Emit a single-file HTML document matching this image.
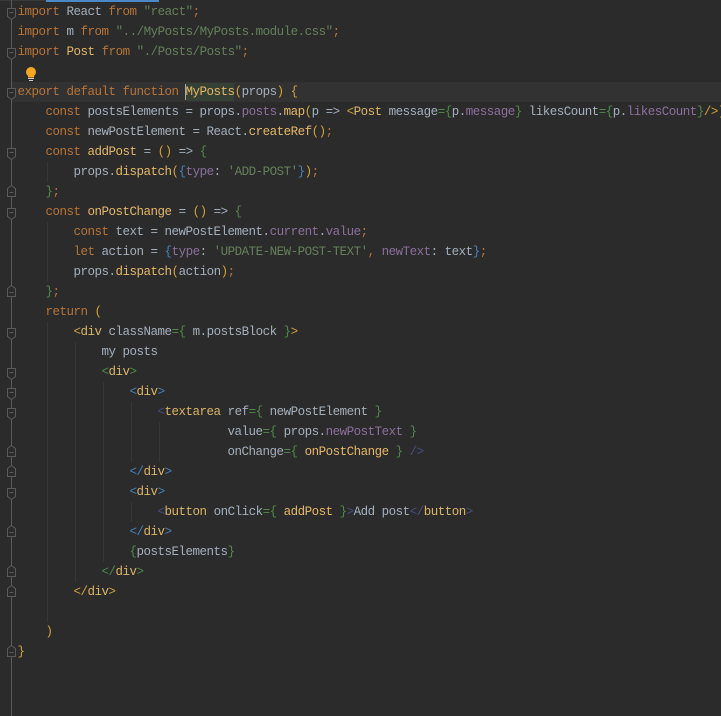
<!DOCTYPE html>
<html><head><meta charset="utf-8">
<style>
html,body{margin:0;padding:0;width:721px;height:716px;overflow:hidden;background:#2b2b2b}
#e{position:relative;width:721px;height:716px;overflow:hidden;background:#2b2b2b;font-family:"Liberation Mono",monospace;font-size:12.5px;letter-spacing:-0.5px;color:#a3b0bd}
.l{position:absolute;left:17.5px;height:20px;line-height:20px;white-space:pre;width:720px}
.k{color:#b87438}.s{color:#64805a}.p{color:#8c6f9e}.f{color:#e6b768}.t{color:#dcb468}
.g{color:#4f8a4a}.y{color:#cfa23a}.b{color:#4682bc}.d{color:#454f85}.o{color:#b87438}
.ig{position:absolute;width:1px;background:#373737}
svg{position:absolute;left:0;top:0}
</style></head><body><div id="e">
<div style="position:absolute;left:46px;top:0;width:113px;height:2px;background:#4a88c7"></div>
<div style="position:absolute;left:0;top:0;width:46px;height:1px;background:#3a3a3a"></div>
<div style="position:absolute;left:12px;top:82px;width:709px;height:20px;background:#323232"></div>
<div style="position:absolute;left:186px;top:83px;width:48px;height:18px;background:#344134"></div>
<div style="position:absolute;left:185px;top:84px;width:1px;height:16px;background:#a8a8a0"></div>
<div class="ig" style="left:47px;top:162px;height:20px"></div>
<div class="ig" style="left:47px;top:222px;height:60px"></div>
<div class="ig" style="left:47px;top:322px;height:300px"></div>
<div class="ig" style="left:75px;top:342px;height:240px"></div>
<div class="ig" style="left:103px;top:382px;height:180px"></div>
<div class="ig" style="left:131px;top:402px;height:60px"></div>
<div class="ig" style="left:159px;top:422px;height:40px"></div>
<div class="ig" style="left:131px;top:502px;height:20px"></div>
<svg width="40" height="716" fill="#2b2b2b" stroke="#5a5a5a" stroke-width="1">
<line x1="11.5" y1="0" x2="11.5" y2="716"/>
<g id="marks">
<path d="M7.5 8.5h8v8l-4 3l-4-3z"/><path d="M9.5 12.5h4"/>
<path d="M7.5 48.5h8v8l-4 3l-4-3z"/><path d="M9.5 52.5h4"/>
<path d="M7.5 88.5h8v8l-4 3l-4-3z"/><path d="M9.5 92.5h4"/>
<path d="M7.5 148.5h8v8l-4 3l-4-3z"/><path d="M9.5 152.5h4"/>
<path d="M7.5 208.5h8v8l-4 3l-4-3z"/><path d="M9.5 212.5h4"/>
<path d="M7.5 328.5h8v8l-4 3l-4-3z"/><path d="M9.5 332.5h4"/>
<path d="M7.5 368.5h8v8l-4 3l-4-3z"/><path d="M9.5 372.5h4"/>
<path d="M7.5 388.5h8v8l-4 3l-4-3z"/><path d="M9.5 392.5h4"/>
<path d="M7.5 408.5h8v8l-4 3l-4-3z"/><path d="M9.5 412.5h4"/>
<path d="M7.5 488.5h8v8l-4 3l-4-3z"/><path d="M9.5 492.5h4"/>
<path d="M7.5 196.5v-8l4-3l4 3v8z"/><path d="M9.5 192.5h4"/>
<path d="M7.5 296.5v-8l4-3l4 3v8z"/><path d="M9.5 292.5h4"/>
<path d="M7.5 456.5v-8l4-3l4 3v8z"/><path d="M9.5 452.5h4"/>
<path d="M7.5 476.5v-8l4-3l4 3v8z"/><path d="M9.5 472.5h4"/>
<path d="M7.5 536.5v-8l4-3l4 3v8z"/><path d="M9.5 532.5h4"/>
<path d="M7.5 576.5v-8l4-3l4 3v8z"/><path d="M9.5 572.5h4"/>
<path d="M7.5 596.5v-8l4-3l4 3v8z"/><path d="M9.5 592.5h4"/>
<path d="M7.5 656.5v-8l4-3l4 3v8z"/><path d="M9.5 652.5h4"/>
</g>
<circle cx="31" cy="72" r="5" fill="#f5a623" stroke="none"/>
<rect x="28" y="75" width="6" height="2.5" fill="#f5a623" stroke="none"/>
<rect x="28" y="78" width="6" height="1" fill="#ccc" stroke="none"/>
<rect x="29" y="80" width="4" height="1" fill="#ccc" stroke="none"/>
</svg>
<div class="l" style="top:2px"><span class="k">import</span> React <span class="k">from</span> <span class="s">"react"</span><span class="o">;</span></div>
<div class="l" style="top:22px"><span class="k">import</span> m <span class="k">from</span> <span class="s">"../MyPosts/MyPosts.module.css"</span><span class="o">;</span></div>
<div class="l" style="top:42px"><span class="k">import</span> <span class="f">Post</span> <span class="k">from</span> <span class="s">"./Posts/Posts"</span><span class="o">;</span></div>
<div class="l" style="top:82px"><span class="k">export default function</span> <span class="f">MyPosts</span><span class="y">(</span>props<span class="y">)</span> <span class="y">{</span></div>
<div class="l" style="top:102px">    <span class="k">const</span> postsElements = props.<span class="p">posts</span>.<span class="f">map</span><span class="y">(</span>p =&gt; <span class="y">&lt;</span><span class="t">Post</span> message<span class="g">={</span>p.<span class="p">message</span><span class="g">}</span> likesCount<span class="g">={</span>p.<span class="p">likesCount</span><span class="g">}</span><span class="y">/&gt;)</span><span class="o">;</span></div>
<div class="l" style="top:122px">    <span class="k">const</span> newPostElement = React.<span class="f">createRef</span><span class="y">()</span><span class="o">;</span></div>
<div class="l" style="top:142px">    <span class="k">const</span> <span class="f">addPost</span> = <span class="y">()</span> =&gt; <span class="g">{</span></div>
<div class="l" style="top:162px">        props.<span class="f">dispatch</span><span class="y">(</span><span class="b">{</span><span class="p">type</span>: <span class="s">'ADD-POST'</span><span class="b">}</span><span class="y">)</span><span class="o">;</span></div>
<div class="l" style="top:182px">    <span class="g">}</span><span class="o">;</span></div>
<div class="l" style="top:202px">    <span class="k">const</span> <span class="f">onPostChange</span> = <span class="y">()</span> =&gt; <span class="g">{</span></div>
<div class="l" style="top:222px">        <span class="k">const</span> text = newPostElement.<span class="p">current</span>.<span class="p">value</span><span class="o">;</span></div>
<div class="l" style="top:242px">        <span class="k">let</span> action = <span class="b">{</span><span class="p">type</span>: <span class="s">'UPDATE-NEW-POST-TEXT'</span><span class="o">,</span> <span class="p">newText</span>: text<span class="b">}</span><span class="o">;</span></div>
<div class="l" style="top:262px">        props.<span class="f">dispatch</span><span class="y">(</span>action<span class="y">)</span><span class="o">;</span></div>
<div class="l" style="top:282px">    <span class="g">}</span><span class="o">;</span></div>
<div class="l" style="top:302px">    <span class="k">return</span> <span class="y">(</span></div>
<div class="l" style="top:322px">        <span class="y">&lt;</span><span class="t">div</span> className<span class="g">={</span> m.postsBlock <span class="g">}</span><span class="y">&gt;</span></div>
<div class="l" style="top:342px">            my posts</div>
<div class="l" style="top:362px">            <span class="g">&lt;</span><span class="t">div</span><span class="g">&gt;</span></div>
<div class="l" style="top:382px">                <span class="b">&lt;</span><span class="t">div</span><span class="b">&gt;</span></div>
<div class="l" style="top:402px">                    <span class="d">&lt;</span><span class="t">textarea</span> ref<span class="g">={</span> newPostElement <span class="g">}</span></div>
<div class="l" style="top:422px">                              value<span class="g">={</span> props.<span class="p">newPostText</span> <span class="g">}</span></div>
<div class="l" style="top:442px">                              onChange<span class="g">={</span> <span class="f">onPostChange</span> <span class="g">}</span> <span class="d">/&gt;</span></div>
<div class="l" style="top:462px">                <span class="b">&lt;/</span><span class="t">div</span><span class="b">&gt;</span></div>
<div class="l" style="top:482px">                <span class="b">&lt;</span><span class="t">div</span><span class="b">&gt;</span></div>
<div class="l" style="top:502px">                    <span class="d">&lt;</span><span class="t">button</span> onClick<span class="g">={</span> <span class="f">addPost</span> <span class="g">}</span><span class="d">&gt;</span>Add post<span class="d">&lt;/</span><span class="t">button</span><span class="d">&gt;</span></div>
<div class="l" style="top:522px">                <span class="b">&lt;/</span><span class="t">div</span><span class="b">&gt;</span></div>
<div class="l" style="top:542px">                <span class="g">{</span>postsElements<span class="g">}</span></div>
<div class="l" style="top:562px">            <span class="g">&lt;/</span><span class="t">div</span><span class="g">&gt;</span></div>
<div class="l" style="top:582px">        <span class="y">&lt;/</span><span class="t">div</span><span class="y">&gt;</span></div>
<div class="l" style="top:622px">    <span class="y">)</span></div>
<div class="l" style="top:642px"><span class="y">}</span></div>
</div></body></html>
